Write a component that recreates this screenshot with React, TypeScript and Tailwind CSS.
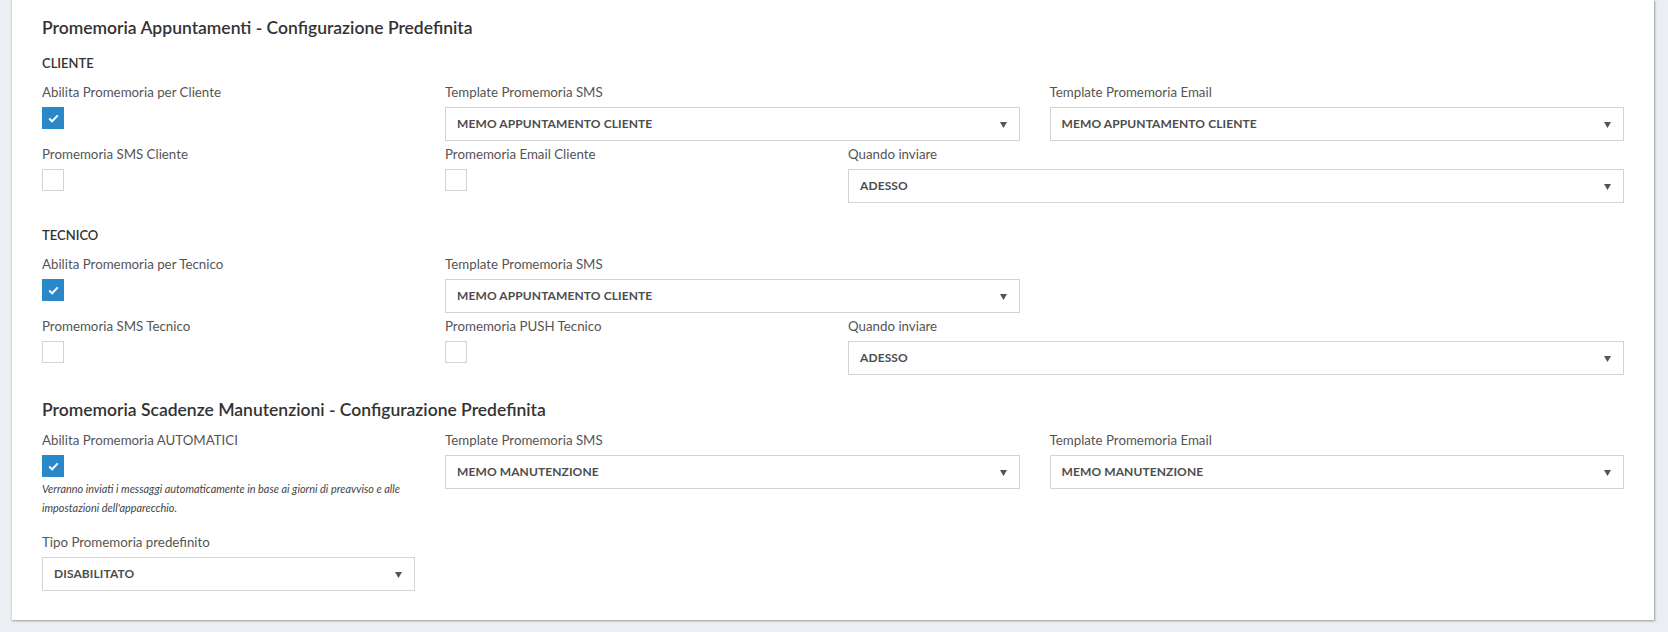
import React from "react";

// fake select box, looks like the bootstrap one in the screenshot
function Select({ value }: { value: string }) {
  return (
    <div className="flex h-[34px] items-center justify-between border border-[#d4d4d4] bg-white pl-[11px] pr-[12px]">
      <span className="text-[12px] font-bold tracking-[0.1px] text-[#4d4d4d]">{value}</span>
      <svg width="7" height="6" viewBox="0 0 7 6" className="mt-[1px]">
        <path d="M0 0 L7 0 L3.5 6 Z" fill="#555" />
      </svg>
    </div>
  );
}

function Check({ checked }: { checked?: boolean }) {
  if (checked) {
    return (
      <div className="flex h-[22px] w-[22px] items-center justify-center bg-[#2a87c8]">
        <svg width="11" height="9" viewBox="0 0 11 9">
          <path d="M1.2 4.6 L4.1 7.3 L9.8 1.4" fill="none" stroke="#fff" strokeWidth="2" />
        </svg>
      </div>
    );
  }
  return <div className="h-[22px] w-[22px] border border-[#d4d4d4] bg-white" />;
}

function Field({ label, span, children }: { label: string; span: string; children: React.ReactNode }) {
  return (
    <div className={span}>
      <div className="h-[18px] text-[13.3px] leading-[18px] text-[#555]">{label}</div>
      <div className="mt-[6px]">{children}</div>
    </div>
  );
}

export default function App() {
  return (
    <div
      className="min-h-[632px] w-full bg-[#ebeef2] pl-[11px] pr-[14px]"
      style={{ fontFamily: "Lato, 'Liberation Sans', sans-serif" }}
    >
      <div className="border-l border-[#d3d7dc] bg-white px-[30px] pt-[16px] pb-[29px] shadow-[1px_1px_2px_rgba(0,0,0,0.35)]">
        {/* Appuntamenti */}
        <h2 className="text-[17.5px] font-semibold leading-[24px] text-[#333]">
          Promemoria Appuntamenti - Configurazione Predefinita
        </h2>

        <div className="mt-[14px] text-[13px] font-semibold leading-[18px] text-[#333]">CLIENTE</div>
        <div className="mt-[11px] grid grid-cols-8 gap-x-[30px] gap-y-[4px]">
          <Field label="Abilita Promemoria per Cliente" span="col-span-2">
            <Check checked />
          </Field>
          <Field label="Template Promemoria SMS" span="col-span-3">
            <Select value="MEMO APPUNTAMENTO CLIENTE" />
          </Field>
          <Field label="Template Promemoria Email" span="col-span-3">
            <Select value="MEMO APPUNTAMENTO CLIENTE" />
          </Field>
          <Field label="Promemoria SMS Cliente" span="col-span-2">
            <Check />
          </Field>
          <Field label="Promemoria Email Cliente" span="col-span-2">
            <Check />
          </Field>
          <Field label="Quando inviare" span="col-span-4">
            <Select value="ADESSO" />
          </Field>
        </div>

        <div className="mt-[23px] text-[13px] font-semibold leading-[18px] text-[#333]">TECNICO</div>
        <div className="mt-[11px] grid grid-cols-8 gap-x-[30px] gap-y-[4px]">
          <Field label="Abilita Promemoria per Tecnico" span="col-span-2">
            <Check checked />
          </Field>
          <Field label="Template Promemoria SMS" span="col-span-3">
            <Select value="MEMO APPUNTAMENTO CLIENTE" />
          </Field>
          <div className="col-span-3" />
          <Field label="Promemoria SMS Tecnico" span="col-span-2">
            <Check />
          </Field>
          <Field label="Promemoria PUSH Tecnico" span="col-span-2">
            <Check />
          </Field>
          <Field label="Quando inviare" span="col-span-4">
            <Select value="ADESSO" />
          </Field>
        </div>

        {/* Manutenzioni */}
        <h2 className="mt-[23px] text-[17.5px] font-semibold leading-[24px] text-[#333]">
          Promemoria Scadenze Manutenzioni - Configurazione Predefinita
        </h2>
        <div className="mt-[9px] grid grid-cols-8 gap-x-[30px]">
          <Field label="Abilita Promemoria AUTOMATICI" span="col-span-2">
            <Check checked />
            <p className="mt-[2px] text-[10.9px] italic leading-[19px] text-[#444]">
              Verranno inviati i messaggi automaticamente in base ai giorni di preavviso e alle impostazioni
              dell'apparecchio.
            </p>
          </Field>
          <Field label="Template Promemoria SMS" span="col-span-3">
            <Select value="MEMO MANUTENZIONE" />
          </Field>
          <Field label="Template Promemoria Email" span="col-span-3">
            <Select value="MEMO MANUTENZIONE" />
          </Field>
        </div>
        <div className="mt-[16px] grid grid-cols-8 gap-x-[30px]">
          <Field label="Tipo Promemoria predefinito" span="col-span-2">
            <Select value="DISABILITATO" />
          </Field>
        </div>
      </div>
    </div>
  );
}
